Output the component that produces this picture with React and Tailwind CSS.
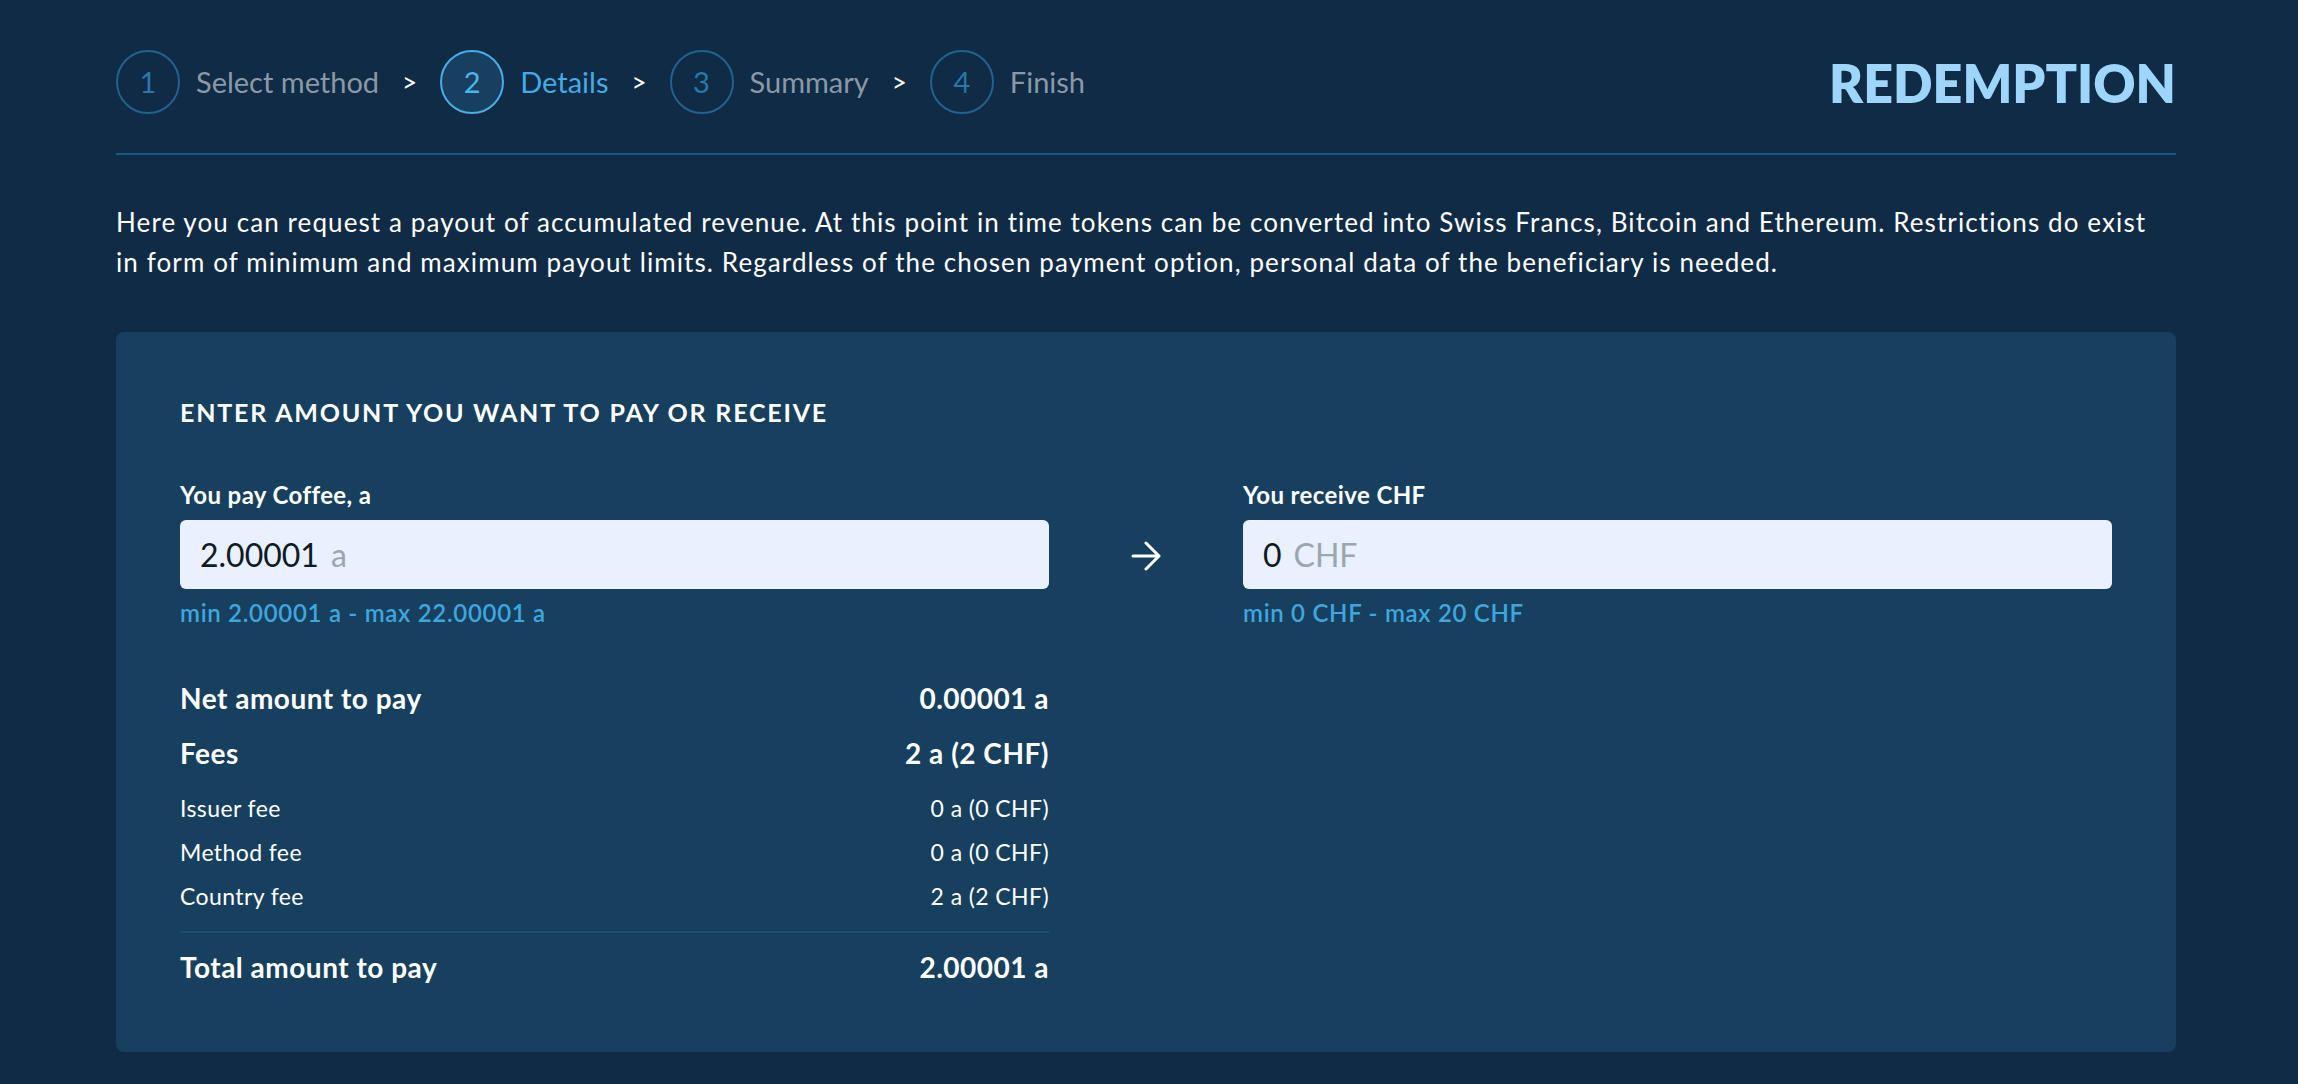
const STEPS = [
  { n: 1, label: "Select method" },
  { n: 2, label: "Details", active: true },
  { n: 3, label: "Summary" },
  { n: 4, label: "Finish" },
];

const FEES = [
  { label: "Issuer fee", value: "0 a (0 CHF)" },
  { label: "Method fee", value: "0 a (0 CHF)" },
  { label: "Country fee", value: "2 a (2 CHF)" },
];

function Step({ n, label, active }) {
  return (
    <div className="flex items-center">
      <div
        className={
          active
            ? "flex h-[64px] w-[64px] items-center justify-center rounded-full border-2 border-[#49aee6] bg-[#173f5f] text-[29px] text-[#4fb4ec]"
            : "flex h-[64px] w-[64px] items-center justify-center rounded-full border-2 border-[#23628d] text-[29px] text-[#2b77a8]"
        }
      >
        {n}
      </div>
      <span
        className={
          active ? "ml-4 text-[29px] text-[#47aae3]" : "ml-4 text-[29px] text-[#8a99a8]"
        }
      >
        {label}
      </span>
    </div>
  );
}

function AmountField({ label, value, unit, hint }) {
  return (
    <div>
      <div className="text-[24px] font-bold leading-[30px] tracking-[0.4px] text-white">
        {label}
      </div>
      <div className="mt-[10px] flex h-[69px] items-center rounded-md bg-[#e8f1fd] px-5 text-[32px]">
        <span className="text-[#0f1a26]">{value}</span>
        <span className="ml-3 text-[#9ba6b0]">{unit}</span>
      </div>
      <div className="mt-[10px] text-[24px] font-semibold leading-[28px] tracking-[0.7px] text-[#3fa6df]">
        {hint}
      </div>
    </div>
  );
}

export default function App() {
  return (
    <div
      className="min-h-screen bg-[#0f2b45] pt-[50px] text-white"
      style={{ fontFamily: "Lato, 'Noto Sans', sans-serif" }}
    >
      <div className="ml-[116px] w-[2060px]">
        <div className="flex h-[105px] items-start justify-between border-b-2 border-[#1d5a82]">
          <div className="flex items-center">
            {STEPS.map((s, i) => (
              <div key={s.n} className="flex items-center">
                {i > 0 && <span className="px-[23px] text-[26px] text-white">&gt;</span>}
                <Step {...s} />
              </div>
            ))}
          </div>
          <h1 className="mt-[7px] text-[52px] font-extrabold leading-[52px] text-[#9dd5fb]">
            REDEMPTION
          </h1>
        </div>

        <p className="mt-[47px] max-w-[2045px] text-[26px] leading-[40px] tracking-[1.1px] text-white">
          Here you can request a payout of accumulated revenue. At this point in time tokens can be
          converted into Swiss Francs, Bitcoin and Ethereum. Restrictions do exist in form of
          minimum and maximum payout limits. Regardless of the chosen payment option, personal data
          of the beneficiary is needed.
        </p>

        <div className="mt-[50px] rounded-lg bg-[#17405f] px-16 pb-[67px] pt-16">
          <h2 className="text-[25px] font-bold leading-[32px] tracking-[1.8px] text-white">
            ENTER AMOUNT YOU WANT TO PAY OR RECEIVE
          </h2>

          <div className="mt-[52px] grid grid-cols-[1fr_194px_1fr]">
            <AmountField
              label="You pay Coffee, a"
              value="2.00001"
              unit="a"
              hint="min 2.00001 a - max 22.00001 a"
            />
            <div className="flex items-start justify-center pt-[61px]">
              <svg width="30" height="30" viewBox="0 0 30 30" fill="none">
                <path
                  d="M2 15h26M15 2l13 13-13 13"
                  stroke="white"
                  strokeWidth="3"
                  strokeLinecap="round"
                  strokeLinejoin="round"
                />
              </svg>
            </div>
            <AmountField
              label="You receive CHF"
              value="0"
              unit="CHF"
              hint="min 0 CHF - max 20 CHF"
            />
          </div>

          <div className="mt-[53px] w-[869px]">
            <div className="flex h-[36px] items-center justify-between text-[28px] font-bold tracking-[0.5px]">
              <span>Net amount to pay</span>
              <span>0.00001 a</span>
            </div>
            <div className="mt-[19px] flex h-[36px] items-center justify-between text-[28px] font-bold tracking-[0.5px]">
              <span>Fees</span>
              <span>2 a (2 CHF)</span>
            </div>
            <div className="mt-[15px]">
              {FEES.map((f) => (
                <div
                  key={f.label}
                  className="flex h-[44px] items-center justify-between text-[23px] tracking-[0.4px]"
                >
                  <span>{f.label}</span>
                  <span>{f.value}</span>
                </div>
              ))}
            </div>
            <div className="mt-[13px] border-t-2 border-[#1f4d6e]" />
            <div className="mt-[16px] flex h-[36px] items-center justify-between text-[28px] font-bold tracking-[0.5px]">
              <span>Total amount to pay</span>
              <span>2.00001 a</span>
            </div>
          </div>
        </div>
      </div>
    </div>
  );
}
